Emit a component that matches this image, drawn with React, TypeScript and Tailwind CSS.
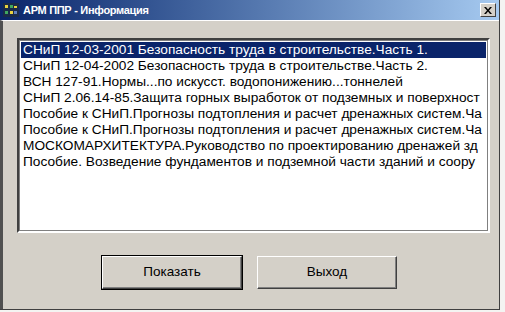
import React, { useState } from 'react';

// visible parts of the list entries, as they are shown in the narrow box
const items = [
  'СНиП 12-03-2001 Безопасность труда в строительстве.Часть 1.',
  'СНиП 12-04-2002 Безопасность труда в строительстве.Часть 2.',
  'ВСН 127-91.Нормы...по искусст. водопонижению...тоннелей',
  'СНиП 2.06.14-85.Защита горных выработок от подземных и поверхност',
  'Пособие к СНиП.Прогнозы подтопления и расчет дренажных систем.Ча',
  'Пособие к СНиП.Прогнозы подтопления и расчет дренажных систем.Ча',
  'МОСКОМАРХИТЕКТУРА.Руководство по проектированию дренажей зд',
  'Пособие. Возведение фундаментов и подземной части зданий и соору',
];

const AppIcon: React.FC = () => (
  <svg width="16" height="14" viewBox="0 0 16 14" className="shrink-0">
    <rect x="0" y="0" width="16" height="14" fill="#1a2a4a" />
    <rect x="2" y="2" width="3" height="3" fill="#e8d040" />
    <rect x="7" y="2" width="3" height="3" fill="#40a860" />
    <rect x="11" y="3" width="3" height="2" fill="#e8d040" />
    <rect x="2" y="8" width="3" height="3" fill="#40a860" />
    <rect x="7" y="8" width="3" height="3" fill="#e8d040" />
    <rect x="11" y="8" width="3" height="3" fill="#6080c0" />
  </svg>
);

const Win98Button: React.FC<{ label: string; isDefault?: boolean }> = ({ label, isDefault }) => (
  <div className={isDefault ? 'border border-black' : 'border border-transparent'}>
    <button className="w-[140px] h-[33px] bg-[#d4d0c8] border border-t-white border-l-white border-r-[#404040] border-b-[#404040] shadow-[inset_-1px_-1px_0_#808080] text-[13.5px] text-black">
      {label}
    </button>
  </div>
);

export default function App() {
  const [selected, setSelected] = useState(0);

  return (
    <div className="w-[505px] h-[312px] bg-[#f4f4f2] font-['Liberation_Sans',Arial,sans-serif]">
      <div className="w-[500px] h-[310px] flex flex-col bg-[#d4d0c8] border-r border-r-[#404040] border-b border-b-[#404040]">
        {/* title bar */}
        <div className="h-[20px] flex items-center pl-[3px] pr-[3px] bg-gradient-to-r from-[#0a246a] to-[#a6caf0]">
          <AppIcon />
          <span className="ml-[4px] text-white font-bold text-[11px] tracking-[-0.3px] leading-none">АРМ ППР - Информация</span>
          <div className="ml-auto w-[16px] h-[14px] bg-[#d4d0c8] border border-t-white border-l-white border-r-[#404040] border-b-[#404040] flex items-center justify-center">
            <svg width="8" height="7" viewBox="0 0 8 7">
              <path d="M0 0h2l2 2.5L6 0h2L5 3.5 8 7H6L4 4.5 2 7H0l3-3.5z" fill="#000" />
            </svg>
          </div>
        </div>

        <div className="flex-1 flex flex-col border-l-[3px] border-l-[#505050] border-t border-t-white">
          <div className="pl-[14px] pr-[9px] pt-[17px]">
            <div className="h-[195px] bg-white border-2 border-t-[#404040] border-l-[#404040] border-r-white border-b-white shadow-[0_0_0_1px_#808080_inset]">
              <div className="p-[2px] pt-[2px]">
                {items.map((t, i) => (
                  <div
                    key={i}
                    onClick={() => setSelected(i)}
                    className={
                      'h-[16px] leading-[16px] pl-[2px] text-[13.7px] whitespace-nowrap overflow-hidden ' +
                      (i === selected ? 'bg-[#0a246a] text-white' : 'text-black')
                    }
                  >
                    {t}
                  </div>
                ))}
              </div>
            </div>
          </div>

          <div className="flex justify-center gap-[13px] mt-[22px] pr-[3px]">
            <Win98Button label="Показать" isDefault />
            <Win98Button label="Выход" />
          </div>
        </div>
      </div>
    </div>
  );
}
